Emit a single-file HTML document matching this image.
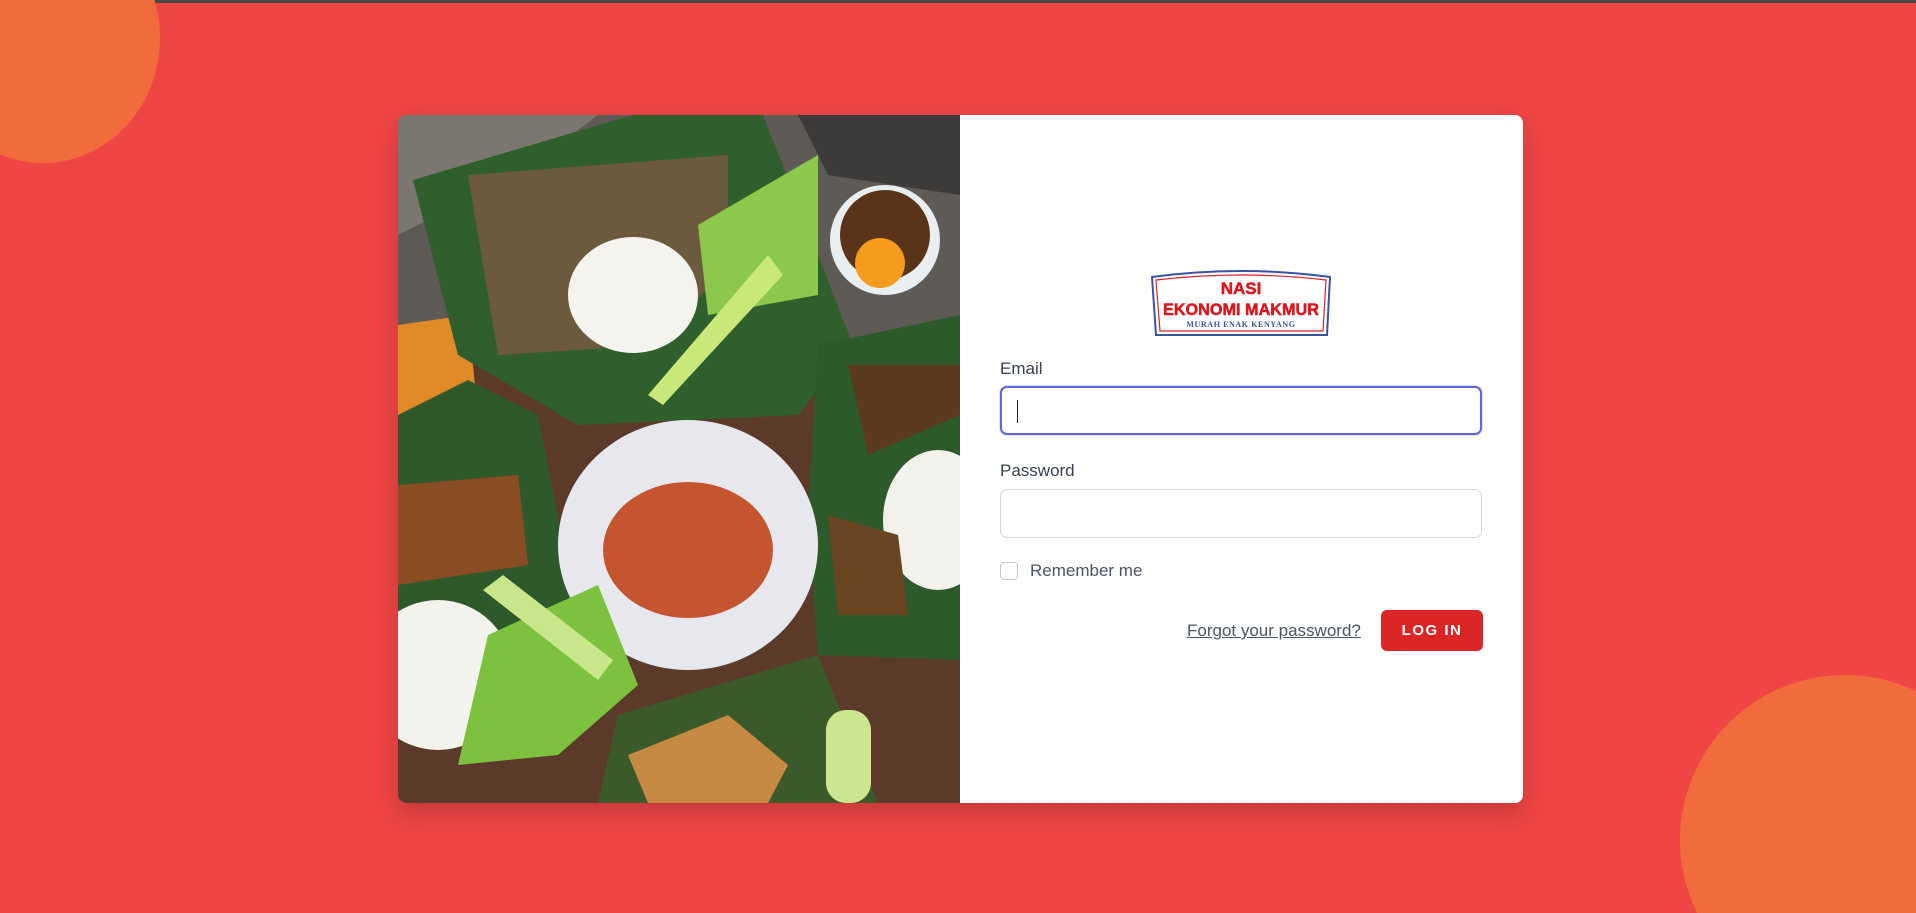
<!DOCTYPE html>
<html><head><meta charset="utf-8">
<style>
html,body{margin:0;padding:0;width:1916px;height:913px;overflow:hidden;}
body{background:#ef4545;font-family:"Liberation Sans",sans-serif;}
.wrap{position:relative;width:1916px;height:913px;overflow:hidden;}
.topbar{position:absolute;left:0;top:0;width:1916px;height:3px;background:#4a4a4a;}
.c1{position:absolute;left:-74px;top:-87px;width:234px;height:250px;border-radius:50%;background:#f26b3c;}
.c2{position:absolute;left:1680px;top:675px;width:236px;height:238px;border-radius:165px 0 0 0;background:#f26b3c;}
.card{position:absolute;left:398px;top:115px;width:1125px;height:688px;background:#fff;border-radius:8px;overflow:hidden;box-shadow:0 10px 25px rgba(0,0,0,.18);}
.photo{position:absolute;left:0;top:0;width:562px;height:688px;}
.logo{position:absolute;left:753px;top:154px;}
label.l{position:absolute;left:602px;font-size:17px;color:#374151;}
.inp{position:absolute;left:602px;width:482px;height:49px;border:1px solid #d1d5db;border-radius:7px;box-sizing:border-box;}
.inp.f{border:2px solid #6366d8;box-shadow:0 0 0 1px rgba(99,102,216,.2);}
.caret{position:absolute;left:15px;top:12px;width:1px;height:23px;background:#222;}
.cb{position:absolute;left:602px;top:447px;width:18px;height:18px;border:1px solid #c7c9cf;border-radius:4px;box-sizing:border-box;}
.rem{position:absolute;left:632px;top:446px;font-size:17px;color:#4b5563;}
.forgot{position:absolute;left:789px;top:506px;font-size:17px;color:#4b5563;text-decoration:underline;}
.btn{position:absolute;left:983px;top:495px;width:102px;height:41px;background:#dc2626;border-radius:6px;color:#fff;font-weight:bold;font-size:15px;letter-spacing:1.5px;text-align:center;line-height:41px;}
</style></head><body>
<div class="wrap">
<div class="topbar"></div>
<div class="c1"></div>
<svg style="position:absolute;left:1680px;top:675px" width="236" height="238" xmlns="http://www.w3.org/2000/svg"><circle cx="165" cy="165" r="165" fill="#f26b3c"/></svg>
<div class="card">
<svg class="photo" viewBox="0 0 562 688" preserveAspectRatio="none" xmlns="http://www.w3.org/2000/svg">
<rect width="562" height="688" fill="#5b3a2a"/>
<rect width="562" height="240" fill="#5e5a55"/>
<polygon points="0,0 200,0 120,60 0,120" fill="#7b766f"/>
<polygon points="400,0 562,0 562,80 430,60" fill="#3c3b3a"/>
<polygon points="0,210 70,200 80,300 0,300" fill="#e08a2a"/>
<polygon points="15,65 235,0 365,0 455,230 400,300 180,310 60,240" fill="#2f5f2c"/>
<polygon points="70,60 330,40 330,150 260,230 100,240" fill="#6b5a3e"/>
<ellipse cx="235" cy="180" rx="65" ry="58" fill="#f4f3ee"/>
<polygon points="300,110 420,40 420,180 310,200" fill="#8cc84b"/>
<polygon points="250,280 370,140 385,160 265,290" fill="#c9e87a"/>
<circle cx="487" cy="125" r="55" fill="#e9eef0"/>
<circle cx="487" cy="120" r="45" fill="#5a3418"/>
<circle cx="482" cy="148" r="25" fill="#f59a1c"/>
<polygon points="0,300 70,265 140,300 175,480 100,560 0,560" fill="#2e5a2b"/>
<polygon points="0,370 120,360 130,450 0,470" fill="#8a4c22"/>
<polygon points="420,230 562,200 562,545 420,540 410,400" fill="#2c5a2a"/>
<polygon points="450,250 562,250 562,300 470,340" fill="#5b3a20"/>
<ellipse cx="540" cy="405" rx="55" ry="70" fill="#f2f1ec"/>
<polygon points="430,400 500,420 510,500 440,500" fill="#6a4522"/>
<ellipse cx="290" cy="430" rx="130" ry="125" fill="#e6e8ee"/>
<ellipse cx="290" cy="435" rx="85" ry="68" fill="#c4552e"/>
<ellipse cx="40" cy="560" rx="75" ry="75" fill="#f3f2ed"/>
<polygon points="90,520 200,470 240,570 160,640 60,650" fill="#7cc23e"/>
<polygon points="85,475 105,460 215,545 200,565" fill="#c8e68a"/>
<polygon points="220,600 420,540 480,688 200,688" fill="#3b5a2a"/>
<polygon points="230,640 330,600 390,650 370,688 250,688" fill="#c78a45"/>
<rect x="428" y="595" width="45" height="93" rx="20" fill="#cbe68f"/>
</svg>
<svg class="logo" width="180" height="68" viewBox="0 0 180 68" xmlns="http://www.w3.org/2000/svg">
<path d="M1,8 Q90,-4 179,8 L176,66 L5,66 Z" fill="#fff" stroke="#3a52a3" stroke-width="2"/>
<path d="M5,11 Q90,1 175,11 L172,62 L9,62 Z" fill="none" stroke="#d9232a" stroke-width="1.2"/>
<text x="90" y="25" text-anchor="middle" font-family="Liberation Sans" font-weight="bold" font-size="17" fill="#e0141c" stroke="#e0141c" stroke-width="0.5">NASI</text>
<text x="90" y="46" text-anchor="middle" font-family="Liberation Sans" font-weight="bold" font-size="17" fill="#e0141c" stroke="#e0141c" stroke-width="0.5" textLength="156" lengthAdjust="spacingAndGlyphs">EKONOMI MAKMUR</text>
<text x="90" y="58" text-anchor="middle" font-family="Liberation Serif" font-weight="bold" font-size="8" fill="#3a52a3" letter-spacing="0.6">MURAH ENAK KENYANG</text>
</svg>
<label class="l" style="top:244px">Email</label>
<div class="inp f" style="top:271px"><div class="caret"></div></div>
<label class="l" style="top:346px">Password</label>
<div class="inp" style="top:374px"></div>
<div class="cb"></div>
<div class="rem">Remember me</div>
<div class="forgot">Forgot your password?</div>
<div class="btn">LOG IN</div>
</div>
</div>
</body></html>
